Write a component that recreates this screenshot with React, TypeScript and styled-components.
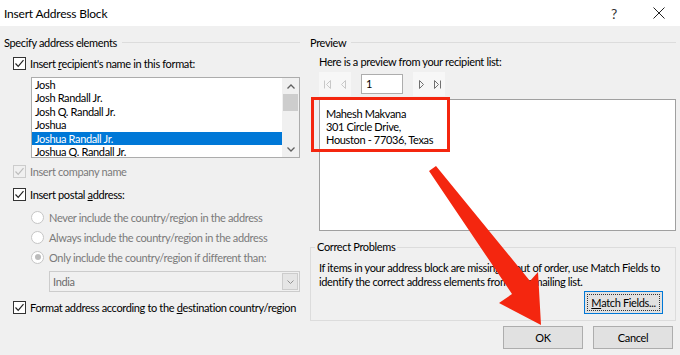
import styled, { createGlobalStyle } from 'styled-components';

const FONT = `Lato, "Noto Sans", sans-serif`;

const GlobalStyle = createGlobalStyle`
  html, body {
    margin: 0;
    padding: 0;
    background: #f0f0f0;
  }
`;

const names = [
  'Josh',
  'Josh Randall Jr.',
  'Josh Q. Randall Jr.',
  'Joshua',
  'Joshua Randall Jr.',
  'Joshua Q. Randall Jr.',
];

const CheckIcon = ({ disabled }: { disabled?: boolean }) => (
  <svg width="11" height="11" viewBox="0 0 11 11">
    <path
      d="M1.5 5.5 L4.2 8.3 L9.5 2.2"
      fill="none"
      stroke={disabled ? '#bcbcbc' : '#222'}
      strokeWidth="1.2"
    />
  </svg>
);

const Chevron = ({ up }: { up?: boolean }) => (
  <svg width="8" height="5" viewBox="0 0 8 5">
    <path
      d={up ? 'M0.5 4.5 L4 1 L7.5 4.5' : 'M0.5 0.5 L4 4 L7.5 0.5'}
      fill="none"
      stroke="#606060"
      strokeWidth="1.3"
    />
  </svg>
);

const NavIcon = ({ kind, disabled }: { kind: 'first' | 'prev' | 'next' | 'last'; disabled?: boolean }) => {
  const c = disabled ? '#c8c8c8' : '#707070';
  const left = kind === 'first' || kind === 'prev';
  const bar = kind === 'first' || kind === 'last';
  return (
    <svg width="7" height="9" viewBox="0 0 7 9">
      {left ? (
        <>
          <path d={bar ? 'M6.5 0.5 L2.5 4.5 L6.5 8.5 Z' : 'M5.5 0.5 L1.5 4.5 L5.5 8.5 Z'} fill="none" stroke={c} strokeWidth="1" />
          {bar && <path d="M0.5 0.5 L0.5 8.5" stroke={c} strokeWidth="1" />}
        </>
      ) : (
        <>
          <path d={bar ? 'M0.5 0.5 L4.5 4.5 L0.5 8.5 Z' : 'M1.5 0.5 L5.5 4.5 L1.5 8.5 Z'} fill="none" stroke={c} strokeWidth="1" />
          {bar && <path d="M6.5 0.5 L6.5 8.5" stroke={c} strokeWidth="1" />}
        </>
      )}
    </svg>
  );
};

export default function App() {
  return (
    <>
      <GlobalStyle />
      <Window>
        <TitleBar>
          <Title>Insert Address Block</Title>
          <HelpMark>?</HelpMark>
          <CloseBox>
            <svg width="12" height="12" viewBox="0 0 12 12">
              <path d="M0.5 0.5 L11.5 11.5 M11.5 0.5 L0.5 11.5" stroke="#222" strokeWidth="1" />
            </svg>
          </CloseBox>
        </TitleBar>

        <Body>
          <LeftCol>
            <GroupHeader>Specify address elements</GroupHeader>

            <CheckRow $top={8}>
              <Box>
                <CheckIcon />
              </Box>
              <Label>
                Insert <u>r</u>ecipient's name in this format:
              </Label>
            </CheckRow>

            <ListBox>
              <ListItems>
                {names.map((n, i) => (
                  <ListItem key={n} $selected={i === 4}>
                    {n}
                  </ListItem>
                ))}
              </ListItems>
              <ScrollBar>
                <ScrollArrow>
                  <Chevron up />
                </ScrollArrow>
                <Thumb />
                <ScrollTrack />
                <ScrollArrow>
                  <Chevron />
                </ScrollArrow>
              </ScrollBar>
            </ListBox>

            <CheckRow $top={7}>
              <Box $disabled>
                <CheckIcon disabled />
              </Box>
              <Label $disabled>Insert company name</Label>
            </CheckRow>

            <CheckRow $top={10}>
              <Box>
                <CheckIcon />
              </Box>
              <Label>
                Insert postal <u>a</u>ddress:
              </Label>
            </CheckRow>

            <RadioGroup>
              <RadioRow>
                <Radio />
                <Label $disabled>Never include the country/region in the address</Label>
              </RadioRow>
              <RadioRow>
                <Radio />
                <Label $disabled>Always include the country/region in the address</Label>
              </RadioRow>
              <RadioRow>
                <Radio $checked />
                <Label $disabled>Only include the country/region if different than:</Label>
              </RadioRow>
            </RadioGroup>

            <Combo>
              <ComboText>India</ComboText>
              <ComboButton>
                <svg width="7" height="4" viewBox="0 0 7 4">
                  <path d="M0.5 0.5 L3.5 3.5 L6.5 0.5" fill="none" stroke="#909090" strokeWidth="1" />
                </svg>
              </ComboButton>
            </Combo>

            <CheckRow $top={9}>
              <Box>
                <CheckIcon />
              </Box>
              <Label>
                Format address according to the <u>d</u>estination country/region
              </Label>
            </CheckRow>
          </LeftCol>

          <RightCol>
            <GroupHeader>Preview</GroupHeader>
            <Hint>Here is a preview from your recipient list:</Hint>

            <NavRow>
              <NavGroup>
                <NavIcon kind="first" disabled />
                <NavIcon kind="prev" disabled />
              </NavGroup>
              <RecordBox>1</RecordBox>
              <NavGroup>
                <NavIcon kind="next" />
                <NavIcon kind="last" />
              </NavGroup>
            </NavRow>

            <PreviewBox>
              <AddressLine>Mahesh Makvana</AddressLine>
              <AddressLine>301 Circle Drive,</AddressLine>
              <AddressLine>Houston - 77036, Texas</AddressLine>
            </PreviewBox>

            <ProblemsGroup>
              <GroupTitle>Correct Problems</GroupTitle>
              <ProblemsText>
                If items in your address block are missing or out of order, use Match Fields to
                <br />
                identify the correct address elements from your mailing list.
              </ProblemsText>
              <MatchButton>
                <FocusRing>
                  <u>M</u>atch Fields...
                </FocusRing>
              </MatchButton>
            </ProblemsGroup>

            <Footer>
              <Button>OK</Button>
              <Button>Cancel</Button>
            </Footer>
          </RightCol>
        </Body>

        <Highlight />
        <ArrowLayer width="680" height="355" viewBox="0 0 680 355">
          <polygon
            points="429,171 436,166 530,281 538,272 541,325 499,303 512,294"
            fill="#f4260f"
          />
        </ArrowLayer>
      </Window>
    </>
  );
}

const Window = styled.div`
  position: relative;
  width: 680px;
  height: 355px;
  overflow: hidden;
  background: #f0f0f0;
  font-family: ${FONT};
  font-size: 11px;
  letter-spacing: -0.35px;
  color: #000;
`;

const TitleBar = styled.div`
  display: flex;
  align-items: center;
  height: 26px;
  padding-left: 4px;
  background: #fff;
`;

const Title = styled.div`
  flex: 1;
  font-size: 12px;
  letter-spacing: -0.2px;
`;

const HelpMark = styled.div`
  width: 20px;
  margin-right: 22px;
  font-size: 14px;
  color: #333;
`;

const CloseBox = styled.div`
  display: flex;
  width: 27px;
  height: 12px;
`;

const Body = styled.div`
  display: flex;
  gap: 10px;
  padding: 9px 4px 0 4px;
`;

const LeftCol = styled.div`
  display: flex;
  flex-direction: column;
  width: 296px;
`;

const RightCol = styled.div`
  display: flex;
  flex-direction: column;
  width: 366px;
`;

const GroupHeader = styled.div`
  display: flex;
  align-items: center;
  gap: 5px;
  height: 14px;
  white-space: nowrap;

  &::after {
    content: '';
    flex: 1;
    border-top: 1px solid #dcdcdc;
  }
`;

const CheckRow = styled.div<{ $top: number }>`
  display: flex;
  align-items: center;
  gap: 4px;
  height: 13px;
  margin-top: ${p => p.$top}px;
  padding-left: 9px;
`;

const Box = styled.div<{ $disabled?: boolean }>`
  display: flex;
  align-items: center;
  justify-content: center;
  box-sizing: border-box;
  width: 13px;
  height: 13px;
  border: 1px solid ${p => (p.$disabled ? '#cccccc' : '#333333')};
  background: ${p => (p.$disabled ? '#f0f0f0' : '#fff')};
`;

const Label = styled.span<{ $disabled?: boolean }>`
  white-space: nowrap;
  color: ${p => (p.$disabled ? '#7a7a7a' : '#000')};
`;

const ListBox = styled.div`
  display: flex;
  box-sizing: border-box;
  width: 269px;
  height: 81px;
  margin: 7px 0 0 27px;
  border: 1px solid #acacac;
  background: #fff;
`;

const ListItems = styled.div`
  flex: 1;
  overflow: hidden;
`;

const ListItem = styled.div<{ $selected?: boolean }>`
  height: 13.4px;
  line-height: 13.4px;
  padding-left: 3px;
  white-space: nowrap;
  background: ${p => (p.$selected ? '#0078d7' : 'transparent')};
  color: ${p => (p.$selected ? '#fff' : '#000')};
`;

const ScrollBar = styled.div`
  display: flex;
  flex-direction: column;
  width: 17px;
  background: #f0f0f0;
`;

const ScrollArrow = styled.div`
  display: flex;
  align-items: center;
  justify-content: center;
  height: 16px;
`;

const Thumb = styled.div`
  height: 17px;
  margin: 0 1px;
  background: #cdcdcd;
`;

const ScrollTrack = styled.div`
  flex: 1;
`;

const RadioGroup = styled.div`
  display: flex;
  flex-direction: column;
  margin-top: 6px;
  padding-left: 27px;
`;

const RadioRow = styled.div`
  display: flex;
  align-items: center;
  gap: 5px;
  height: 20px;
`;

const Radio = styled.div<{ $checked?: boolean }>`
  position: relative;
  box-sizing: border-box;
  width: 13px;
  height: 13px;
  border: 1px solid #c6c6c6;
  border-radius: 50%;
  background: #fff;

  &::after {
    content: '';
    display: ${p => (p.$checked ? 'block' : 'none')};
    position: absolute;
    inset: 2.5px;
    border-radius: 50%;
    background: #bcbcbc;
  }
`;

const Combo = styled.div`
  display: flex;
  align-items: center;
  box-sizing: border-box;
  width: 251px;
  height: 21px;
  margin: 4px 0 0 45px;
  border: 1px solid #cccccc;
  background: #f0f0f0;
`;

const ComboText = styled.div`
  flex: 1;
  padding-left: 3px;
  color: #6d6d6d;
`;

const ComboButton = styled.div`
  display: flex;
  align-items: center;
  justify-content: center;
  box-sizing: border-box;
  width: 16px;
  height: 17px;
  margin-right: 1px;
  border: 1px solid #cccccc;
  background: #e5e5e5;
`;

const Hint = styled.div`
  height: 14px;
  line-height: 14px;
  margin-top: 6px;
  padding-left: 9px;
  white-space: nowrap;
`;

const NavRow = styled.div`
  display: flex;
  align-items: center;
  gap: 10px;
  height: 24px;
  margin: 3px 0 0 9px;
`;

const NavGroup = styled.div`
  display: flex;
  align-items: center;
  justify-content: space-around;
  width: 32px;
  height: 24px;
  background: #f7f7f7;
`;

const RecordBox = styled.div`
  box-sizing: border-box;
  width: 42px;
  height: 20px;
  padding: 2px 0 0 4px;
  border: 1px solid #adadad;
  background: #fff;
`;

const PreviewBox = styled.div`
  box-sizing: border-box;
  width: 357px;
  height: 132px;
  margin: 3px 0 0 9px;
  padding: 7px 0 0 6px;
  border: 1px solid #a0a0a0;
  background: #fff;
`;

const AddressLine = styled.div`
  height: 13px;
  line-height: 13px;
  white-space: nowrap;
`;

const ProblemsGroup = styled.div`
  display: flex;
  flex-direction: column;
  box-sizing: border-box;
  height: 74px;
  margin-top: 16px;
  border: 1px solid #dcdcdc;
`;

const GroupTitle = styled.div`
  align-self: flex-start;
  height: 14px;
  line-height: 14px;
  margin: -8px 0 0 4px;
  padding: 0 2px;
  background: #f0f0f0;
`;

const ProblemsText = styled.div`
  margin-top: 7px;
  padding-left: 8px;
  line-height: 14px;
  white-space: nowrap;
`;

const MatchButton = styled.div`
  align-self: flex-end;
  display: flex;
  box-sizing: border-box;
  width: 79px;
  height: 23px;
  margin: 2px 12px 0 0;
  padding: 2px;
  border: 1px solid #0078d7;
  background: #e1e1e1;
`;

const FocusRing = styled.div`
  flex: 1;
  display: flex;
  align-items: center;
  justify-content: center;
  border: 1px dotted #333;
  white-space: nowrap;
`;

const Footer = styled.div`
  display: flex;
  justify-content: flex-end;
  gap: 10px;
  margin: 5px 3px 0 0;
`;

const Button = styled.div`
  display: flex;
  align-items: center;
  justify-content: center;
  box-sizing: border-box;
  width: 80px;
  height: 23px;
  border: 1px solid #adadad;
  background: #e1e1e1;
`;

const Highlight = styled.div`
  position: absolute;
  left: 311px;
  top: 97px;
  width: 139px;
  height: 55px;
  box-sizing: border-box;
  border: 3px solid #f4260f;
  pointer-events: none;
`;

const ArrowLayer = styled.svg`
  position: absolute;
  left: 0;
  top: 0;
  pointer-events: none;
`;
